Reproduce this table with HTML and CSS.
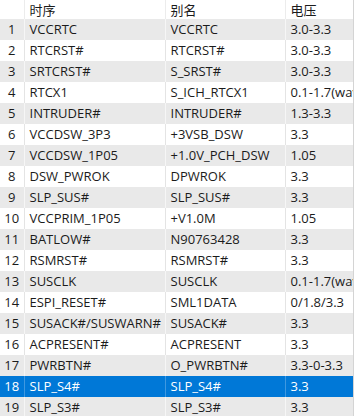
FILE: index.html
```html
<!DOCTYPE html>
<html>
<head>
<meta charset="utf-8">
<link rel="stylesheet" href="styles.css">
</head>
<body>
<div class="wrap">
<table class="grid">
<colgroup><col class="c-num"><col class="c-seq"><col class="c-alias"><col class="c-volt"></colgroup>
<thead>
<tr><th></th><th>时序</th><th>别名</th><th>电压</th></tr>
</thead>
<tbody>
<tr class="odd"><td class="num">1</td><td>VCCRTC</td><td>VCCRTC</td><td>3.0-3.3</td></tr>
<tr><td class="num">2</td><td>RTCRST#</td><td>RTCRST#</td><td>3.0-3.3</td></tr>
<tr class="odd"><td class="num">3</td><td>SRTCRST#</td><td>S_SRST#</td><td>3.0-3.3</td></tr>
<tr><td class="num">4</td><td>RTCX1</td><td>S_ICH_RTCX1</td><td>0.1-1.7(wave)</td></tr>
<tr class="odd"><td class="num">5</td><td>INTRUDER#</td><td>INTRUDER#</td><td>1.3-3.3</td></tr>
<tr><td class="num">6</td><td>VCCDSW_3P3</td><td>+3VSB_DSW</td><td>3.3</td></tr>
<tr class="odd"><td class="num">7</td><td>VCCDSW_1P05</td><td>+1.0V_PCH_DSW</td><td>1.05</td></tr>
<tr><td class="num">8</td><td>DSW_PWROK</td><td>DPWROK</td><td>3.3</td></tr>
<tr class="odd"><td class="num">9</td><td>SLP_SUS#</td><td>SLP_SUS#</td><td>3.3</td></tr>
<tr><td class="num">10</td><td>VCCPRIM_1P05</td><td>+V1.0M</td><td>1.05</td></tr>
<tr class="odd"><td class="num">11</td><td>BATLOW#</td><td>N90763428</td><td>3.3</td></tr>
<tr><td class="num">12</td><td>RSMRST#</td><td>RSMRST#</td><td>3.3</td></tr>
<tr class="odd"><td class="num">13</td><td>SUSCLK</td><td>SUSCLK</td><td>0.1-1.7(wave)</td></tr>
<tr><td class="num">14</td><td>ESPI_RESET#</td><td>SML1DATA</td><td>0/1.8/3.3</td></tr>
<tr class="odd"><td class="num">15</td><td>SUSACK#/SUSWARN#</td><td>SUSACK#</td><td>3.3</td></tr>
<tr><td class="num">16</td><td>ACPRESENT#</td><td>ACPRESENT</td><td>3.3</td></tr>
<tr class="odd"><td class="num">17</td><td>PWRBTN#</td><td>O_PWRBTN#</td><td>3.3-0-3.3</td></tr>
<tr class="sel"><td class="num">18</td><td>SLP_S4#</td><td>SLP_S4#</td><td>3.3</td></tr>
<tr class="odd"><td class="num">19</td><td>SLP_S3#</td><td>SLP_S3#</td><td>3.3</td></tr>
</tbody>
</table>
</div>
</body>
</html>
```
FILE: styles.css
```css
html, body {
  margin: 0;
  padding: 0;
  background: #ffffff;
}
body {
  font-family: "Open Sans", "Noto Sans CJK SC", sans-serif;
  font-size: 13px;
  color: #1b1b1b;
  overflow: hidden;
}
.wrap {
  width: 353px;
  border-right: 1px solid #d4d4d4;
  overflow: hidden;
}
.grid {
  border-collapse: collapse;
  table-layout: fixed;
  width: 353px;
}
.c-num { width: 24px; }
.c-seq { width: 141px; }
.c-alias { width: 120px; }
.c-volt { width: 68px; }
th, td {
  padding: 0 0 0 5px;
  white-space: nowrap;
  overflow: hidden;
  text-align: left;
  font-weight: normal;
  border-right: 1px solid #e4e4e4;
}
th {
  height: 19px;
  line-height: 19px;
  background: #ffffff;
  font-family: "Noto Sans CJK SC", sans-serif;
  font-size: 13px;
  border-right-color: #ececec;
}
td {
  height: 21px;
  line-height: 21px;
}
td.num {
  text-align: center;
  padding: 0;
}
tr.odd td {
  background: #e9e9e9;
  border-right-color: #f6f6f6;
}
tr.sel td {
  background: #0078d7;
  color: #ffffff;
  border-right-color: #3f98e0;
}
```
